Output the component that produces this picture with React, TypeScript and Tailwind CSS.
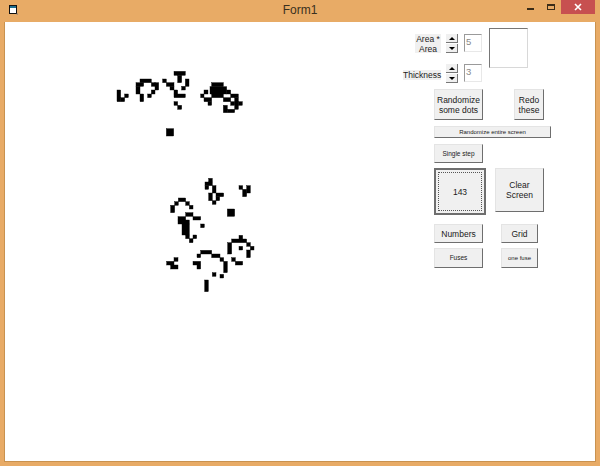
type R = [number, number, number, number];

const clusterA: R[] = [
  [51, 90, 62, 125], [62, 113, 74, 125], [74, 102, 85, 113],
  [120, 57, 154, 68], [108, 68, 131, 79], [108, 79, 120, 102], [120, 102, 131, 125], [154, 68, 165, 79], [165, 68, 176, 90], [154, 90, 165, 102], [143, 102, 154, 113],
  [222, 34, 256, 46], [233, 46, 245, 68], [188, 57, 199, 68], [199, 68, 222, 79], [210, 79, 222, 90], [222, 90, 233, 102], [256, 57, 267, 79], [245, 79, 256, 90], [222, 102, 256, 113], [222, 125, 233, 136], [233, 136, 245, 148],
  [335, 68, 370, 80], [330, 80, 380, 102], [380, 90, 392, 102], [335, 102, 370, 113], [312, 90, 324, 102], [302, 102, 312, 113], [312, 113, 335, 125], [324, 125, 335, 136],
  [392, 102, 415, 113], [370, 113, 392, 125], [404, 113, 415, 148], [415, 125, 427, 136], [370, 136, 382, 158], [382, 148, 404, 158], [392, 125, 404, 136],
  [199, 206, 221, 228],
];

const clusterB: R[] = [
  [176, 25, 187, 36], [165, 36, 187, 47], [165, 47, 176, 58], [187, 47, 198, 69], [176, 69, 187, 92], [198, 69, 221, 80], [198, 80, 209, 92], [187, 92, 198, 103],
  [267, 47, 278, 58], [278, 58, 290, 80], [290, 47, 301, 69],
  [232, 117, 254, 139],
  [85, 84, 107, 95], [74, 95, 85, 106], [62, 106, 74, 128], [107, 95, 118, 106], [118, 106, 129, 117],
  [107, 128, 129, 139], [84, 140, 107, 150], [129, 140, 152, 150], [84, 150, 118, 162], [96, 162, 118, 195], [152, 162, 163, 173], [107, 195, 118, 206], [118, 206, 129, 218], [129, 195, 140, 206],
  [267, 196, 278, 207], [245, 207, 290, 218], [233, 218, 245, 252], [290, 218, 301, 229], [267, 229, 278, 240], [301, 229, 312, 240], [290, 240, 301, 263], [245, 263, 256, 274], [256, 274, 278, 285],
  [72, 263, 84, 274], [50, 274, 72, 285], [62, 285, 84, 297],
  [152, 241, 185, 252], [141, 252, 152, 263], [185, 252, 210, 263], [210, 263, 221, 274], [221, 274, 232, 308], [129, 274, 152, 285], [141, 285, 152, 297], [187, 308, 198, 319], [210, 313, 221, 324], [164, 330, 175, 365],
];

function Cells({ cells, x, y }: { cells: R[]; x: number; y: number }) {
  return (
    <g transform={`translate(${x} ${y}) scale(${1 / 3})`}>
      {cells.map(([a, b, c, d], i) => (
        <rect key={i} x={a} y={b} width={c - a} height={d - b} fill="#000" stroke="#000" strokeWidth="1.2" />
      ))}
    </g>
  );
}

function Btn({ className, children }: { className: string; children: React.ReactNode }) {
  return (
    <div className={`flex items-center justify-center text-center bg-[#f0f0f0] border border-t-[#e4e4e4] border-l-[#e4e4e4] border-r-[#6e6e6e] border-b-[#6e6e6e] text-[#1a1a1a] ${className}`}>
      {children}
    </div>
  );
}

function Spinner() {
  return (
    <div className="flex flex-col w-[12px] h-[19px] gap-[1px]">
      <div className="flex-1 flex items-center justify-center bg-[#f0f0f0] border-b border-r border-[#777]">
        <div className="w-0 h-0 border-x-[3px] border-x-transparent border-b-[3px] border-b-black" />
      </div>
      <div className="flex-1 flex items-center justify-center bg-[#f0f0f0] border-b border-r border-[#777]">
        <div className="w-0 h-0 border-x-[3px] border-x-transparent border-t-[3px] border-t-black" />
      </div>
    </div>
  );
}

function NumBox({ value }: { value: string }) {
  return (
    <div className="ml-[6px] w-[18px] h-[18px] shrink-0 bg-white border border-t-[#9a9a9a] border-l-[#9a9a9a] border-r-[#e8e8e8] border-b-[#e8e8e8] pl-[1px] text-[9.5px] leading-[13px] text-[#888]">
      {value}
    </div>
  );
}

export default function App() {
  return (
    <div className="w-[600px] h-[466px] flex flex-col bg-[#e8ab66] overflow-hidden font-['Liberation_Sans',Arial,sans-serif]">
      <div className="relative h-[22px] shrink-0 flex items-center justify-center text-[12px] text-[#3a3020]">
        <svg className="absolute left-[9px] top-[5px]" width="9" height="10" viewBox="0 0 9 10">
          <rect x="0.5" y="0.5" width="7" height="8" fill="#fff" stroke="#111" />
          <rect x="1" y="1" width="6" height="2" fill="#1f6f8f" />
          <rect x="7.5" y="8.5" width="1.5" height="1" fill="#777" />
        </svg>
        <span className="pb-[2px]">Form1</span>
        <div className="absolute left-[527px] top-[8px] w-[7px] h-[2px] bg-[#3a2c18]" />
        <div className="absolute left-[547px] top-[4px] w-[8px] h-[6px] border border-t-2 border-[#3a2c18]" />
        <div className="absolute left-[561px] top-0 w-[34px] h-[14px] bg-[#c75050] flex items-center justify-center">
          <svg width="8" height="8" viewBox="0 0 8 8">
            <path d="M1 1 L7 7 M7 1 L1 7" stroke="#fff" strokeWidth="1.6" />
          </svg>
        </div>
      </div>
      <div className="flex-1 mx-[4px] mb-[4px] bg-white flex border border-t-0 border-[#c9924f]">
        <svg className="w-[398px] h-[438px] shrink-0" viewBox="5 22 398 438">
          <Cells cells={clusterA} x={100} y={60} />
          <Cells cells={clusterB} x={150} y={170} />
        </svg>
        <div className="w-[170px] flex flex-col pt-[6px] text-[8.5px] leading-[10px]">
          <div className="flex h-[55px]">
            <div className="w-[80px] shrink-0 flex flex-col pt-[6px]">
              <div className="flex pl-[12px] h-[31px]">
                <div className="w-[26px] h-[19px] mr-[5px] bg-[#f0f0f0] text-center text-[#222] whitespace-nowrap">
                  Area *<br />Area
                </div>
                <Spinner />
                <NumBox value="5" />
              </div>
              <div className="flex">
                <div className="w-[38px] h-[10px] mt-[6px] mr-[5px] bg-[#f0f0f0] text-[#222] whitespace-nowrap">Thickness</div>
                <Spinner />
                <NumBox value="3" />
              </div>
            </div>
            <div className="ml-[6px] w-[39px] h-[40px] bg-white border border-t-[#777] border-l-[#777] border-r-[#d8d8d8] border-b-[#d8d8d8]" />
          </div>
          <div className="flex mt-[6px] ml-[31px] gap-[31px]">
            <Btn className="w-[49px] h-[31px]">Randomize<br />some dots</Btn>
            <Btn className="w-[30px] h-[31px]">Redo<br />these</Btn>
          </div>
          <Btn className="mt-[6px] ml-[31px] w-[117px] h-[12px] text-[6px]">Randomize entire screen</Btn>
          <Btn className="mt-[6px] ml-[31px] w-[49px] h-[19px] text-[6.5px]">Single step</Btn>
          <div className="flex items-start mt-[5px] ml-[31px] gap-[9px]">
            <div className="w-[52px] h-[47px] bg-[#f0f0f0] border-2 border-[#6e6e6e] p-[2px]">
              <div className="w-full h-full flex items-center justify-center border border-dotted border-[#555] text-[#1a1a1a]">143</div>
            </div>
            <Btn className="w-[49px] h-[44px]">Clear<br />Screen</Btn>
          </div>
          <div className="flex mt-[9px] ml-[31px] gap-[18px]">
            <Btn className="w-[49px] h-[19px]">Numbers</Btn>
            <Btn className="w-[37px] h-[19px]">Grid</Btn>
          </div>
          <div className="flex mt-[5px] ml-[31px] gap-[18px]">
            <Btn className="w-[49px] h-[20px] text-[6.5px]">Fuses</Btn>
            <Btn className="w-[37px] h-[20px] text-[6px]">one fuse</Btn>
          </div>
        </div>
      </div>
    </div>
  );
}
